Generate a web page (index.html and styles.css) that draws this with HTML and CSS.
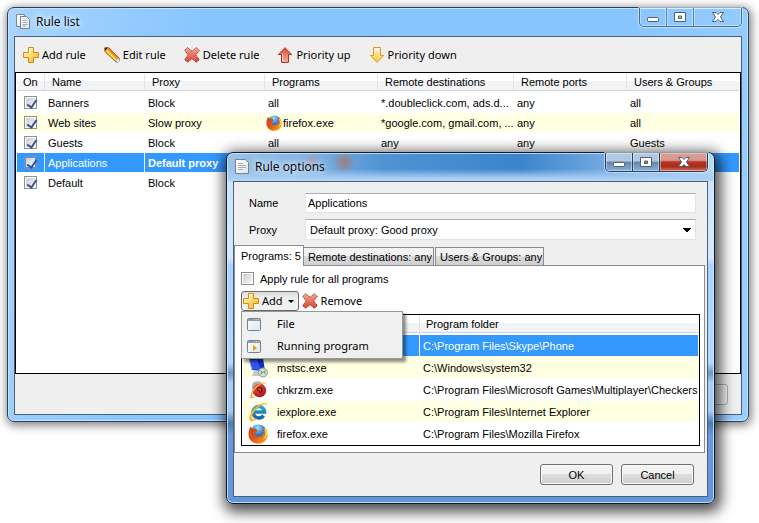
FILE: index.html
```html
<!DOCTYPE html>
<html lang="en">
<head>
<meta charset="utf-8">
<title>Rule list</title>
<link rel="stylesheet" href="styles.css">
</head>
<body>
<svg class="defs" aria-hidden="true">
  <defs>
    <linearGradient id="gold" x1="0" y1="0" x2="1" y2="1"><stop offset="0" stop-color="#fff6cc"/><stop offset=".5" stop-color="#ffdc6a"/><stop offset="1" stop-color="#f5a623"/></linearGradient>
    <linearGradient id="red" x1="0" y1="0" x2="0" y2="1"><stop offset="0" stop-color="#f3a898"/><stop offset="1" stop-color="#d8432c"/></linearGradient>
    <linearGradient id="redUp" x1="0" y1="0" x2="0" y2="1"><stop offset="0" stop-color="#d9492f"/><stop offset="1" stop-color="#f2b5a6"/></linearGradient>
    <linearGradient id="goldDown" x1="0" y1="0" x2="0" y2="1"><stop offset="0" stop-color="#fffbe6"/><stop offset="1" stop-color="#ffc526"/></linearGradient>
    <linearGradient id="paper" x1="0" y1="0" x2="1" y2="1"><stop offset="0" stop-color="#fff"/><stop offset="1" stop-color="#dfe5ea"/></linearGradient>
    <radialGradient id="globe" cx=".45" cy=".2" r=".8"><stop offset="0" stop-color="#9fe0fa"/><stop offset=".5" stop-color="#2f7fc8"/><stop offset="1" stop-color="#123a7c"/></radialGradient>
    <linearGradient id="fox" x1="0" y1="0" x2="1" y2="1"><stop offset="0" stop-color="#c8401a"/><stop offset=".5" stop-color="#e05a17"/><stop offset="1" stop-color="#fbb02a"/></linearGradient>
    <radialGradient id="ball" cx=".4" cy=".35" r=".7"><stop offset="0" stop-color="#f2594b"/><stop offset="1" stop-color="#a80f12"/></radialGradient>
    <linearGradient id="eblue" x1="0" y1="0" x2="0" y2="1"><stop offset="0" stop-color="#2aa4e6"/><stop offset="1" stop-color="#1466b0"/></linearGradient>
  </defs>
  <symbol id="plus" viewBox="0 0 16 16"><path d="M5.500.500h5v5h5v5h-5v5h-5v-5h-5v-5h5z" fill="url(#gold)" stroke="#cf8a1e"/><path d="M6.500 6.500V1.500h3" fill="none" stroke="#fffbe8"/></symbol>
  <symbol id="pencil" viewBox="0 0 16 16"><path d="M1 1l3.500-.5 11 11v1l-2.500 2.500h-1L.8 4.500z" fill="#f5a11c" stroke="#9c4a0a" stroke-width=".8"/><path d="M2.500 3.500l10 10" stroke="#ffe27a" stroke-width="1.600"/><path d="M4.500 2l9.500 9.500" stroke="#d9720c"/><path d="M.5.500l3.500.3-3 3z" fill="#3a2410"/><path d="M11.500 13.500l2.500-2.500 1.500 1.500v1.500L14 15.500h-1z" fill="#dcdcdc" stroke="#999" stroke-width=".6"/></symbol>
  <symbol id="cross" viewBox="0 0 16 16"><path d="M3.500.7L8 4.300 12.500.7l2.800 2.800L11.700 8l3.600 4.500-2.800 2.800L8 11.700l-4.500 3.600-2.800-2.800L4.300 8 .7 3.500z" fill="url(#red)" stroke="#a63323" stroke-dasharray="1.500 .6"/></symbol>
  <symbol id="up" viewBox="0 0 16 16"><path d="M8 .7l6.700 6.800h-3.200v8h-7v-8H1.300z" fill="url(#redUp)" stroke="#aa3a28"/><path d="M5.500 14.500v-8" stroke="#f7c9bf" fill="none"/></symbol>
  <symbol id="down" viewBox="0 0 16 16"><path d="M8 15.300l6.700-6.800h-3.200v-8h-7v8H1.300z" fill="url(#goldDown)" stroke="#dc9a1c"/></symbol>
  <symbol id="page" viewBox="0 0 16 16"><path d="M.5.500h10l3 3v11H.5z" fill="url(#paper)" stroke="#75818c"/><path d="M3 4.500h5M3 6.500h8M3 8.500h8M3 10.500h5" stroke="#a4aab0"/></symbol>
  <symbol id="pages" viewBox="0 0 16 16"><path d="M.5.500h8v12h-8z" fill="url(#paper)" stroke="#7d8b97"/><path d="M4.500 2.500h6l3 3v9h-9z" fill="url(#paper)" stroke="#75818c"/><path d="M6.500 6.500h4M6.500 8.500h5M6.500 10.500h5M6.500 12h3" stroke="#a4aab0"/></symbol>
  <symbol id="firefox" viewBox="0 0 20 20"><circle cx="10.500" cy="9" r="8.500" fill="url(#globe)"/><path d="M2.500 2.500L4.500 5l3-.5 2 1.800-.8 1.900L6.500 9.500c.5 2.500 2.500 3.500 5 3 2-.4 3.500-1.500 4-3.500.5-2-.2-4.500-1.500-6 3 1 5.500 4.500 5.500 8 0 5-4 8.700-9.300 8.700C4.500 19.700.5 15.500.5 10.500.5 7.500 1.300 4.500 2.500 2.500z" fill="url(#fox)"/><path d="M15.500 4c3 4 2.500 9-1 11.500 5-1 6-7 3-10.500z" fill="#fddc4b"/></symbol>
  <symbol id="checkers" viewBox="0 0 20 20"><path d="M4 6c0-4 4-5.500 8-4.500l4 4L5 15z" fill="#aeb0b3"/><circle cx="11.500" cy="10.500" r="6.700" fill="url(#ball)"/><path d="M9 9.500a2.500 2.500 0 1 1 2.500 3M9 9.500a2 2 0 0 0 3 1" fill="none" stroke="#760a0c" stroke-width="1.300"/><path d="M18.500 4C17 .5 9 4 5.500 9S1 18.500 3.500 18.500c1.500 0 3.500-.9 5-2-6 1.700-5.500-2-2-6.500S15.500 2.500 18.500 4z" fill="#f9b42e"/></symbol>
  <symbol id="ie" viewBox="0 0 20 20"><path d="M15.500 13.500a5.700 5.700 0 1 1 1-3.500H6.500" fill="none" stroke="url(#eblue)" stroke-width="3.600"/><path d="M19 3C18-.5 10 2 5.500 7.500S.5 19 3.500 19c1.500 0 3.500-1.200 5-2.500-6.500 3-5.500-2-2.500-6.500S16-.5 19 3z" fill="#fbbd2f" stroke="#e29d15" stroke-width=".4"/></symbol>
  <symbol id="remote" viewBox="0 0 20 20"><path d="M1 1l14-1 2 13-13-1z" fill="#1530c0"/><path d="M2 2l7 0 4 10-9-1z" fill="#3358ee"/><path d="M1 1l3 11" stroke="#9bb4e8"/><path d="M6 13h6l2 5H4z" fill="#c3c8ce"/><circle cx="15" cy="14.500" r="4.500" fill="#d5dbd8" stroke="#8f9a96"/><path d="M12.500 13l2 1.500-2 1.500M17.500 12.500l-2 1.500 2 1.500" fill="none" stroke="#2f9d3c"/></symbol>
  <symbol id="win" viewBox="0 0 14 13"><rect x=".5" y=".5" width="13" height="12" rx="1" fill="url(#paper)" stroke="#75818c"/><path d="M1 2h12" stroke="#8d9cab" stroke-width="2"/><path d="M7 1.500h1m1 0h1m1 0h1" stroke="#e9d77a"/></symbol>
  <symbol id="winrun" viewBox="0 0 14 13"><use href="#win"/><path d="M6 5l4 3-4 3z" fill="#e8a010"/></symbol>
  <symbol id="gmin" viewBox="0 0 14 12"><rect x="1.500" y="6.500" width="11" height="4" rx="1" fill="#fff" stroke="#4f5f75"/></symbol>
  <symbol id="gmax" viewBox="0 0 14 12"><path fill-rule="evenodd" d="M1.500 1.500h11v9h-11zM5.500 5v2.500h3V5z" fill="#fff" stroke="#4f5f75"/></symbol>
  <symbol id="gx" viewBox="0 0 14 12"><path d="M1.500 1.500h3.500l2 2 2-2h3.500L9.500 6l3 4.500H9l-2-2-2 2H1.500L4.500 6z" fill="#fff" stroke="#4f5f75"/></symbol>
</svg>

<main class="window main">
  <header class="titlebar">
    <svg class="i16"><use href="#pages"/></svg>
    <h1>Rule list</h1>
    <div class="controls">
      <button type="button" aria-label="Minimize"><svg><use href="#gmin"/></svg></button>
      <button type="button" aria-label="Maximize"><svg><use href="#gmax"/></svg></button>
      <button type="button" class="x" aria-label="Close"><svg><use href="#gx"/></svg></button>
    </div>
  </header>
  <div class="client">
    <nav class="toolbar">
      <button type="button"><svg class="i16"><use href="#plus"/></svg>Add rule</button>
      <button type="button"><svg class="i16"><use href="#pencil"/></svg>Edit rule</button>
      <button type="button"><svg class="i16"><use href="#cross"/></svg>Delete rule</button>
      <button type="button"><svg class="i16"><use href="#up"/></svg>Priority up</button>
      <button type="button"><svg class="i16"><use href="#down"/></svg>Priority down</button>
    </nav>
    <div class="list rules">
      <table>
        <colgroup><col class="c-on"><col class="c-name"><col class="c-proxy"><col class="c-mid"><col class="c-dest"><col class="c-mid"><col></colgroup>
        <thead><tr><th>On</th><th>Name</th><th>Proxy</th><th>Programs</th><th>Remote destinations</th><th>Remote ports</th><th>Users &amp; Groups</th></tr></thead>
        <tbody>
          <tr><td><input type="checkbox" checked aria-label="Banners"></td><td>Banners</td><td>Block</td><td>all</td><td>*.doubleclick.com, ads.d...</td><td>any</td><td>all</td></tr>
          <tr><td><input type="checkbox" checked aria-label="Web sites"></td><td>Web sites</td><td>Slow proxy</td><td class="app"><svg class="i16"><use href="#firefox"/></svg>firefox.exe</td><td>*google.com, gmail.com, ...</td><td>any</td><td>all</td></tr>
          <tr><td><input type="checkbox" checked aria-label="Guests"></td><td>Guests</td><td>Block</td><td>all</td><td>any</td><td>any</td><td>Guests</td></tr>
          <tr class="selected"><td><input type="checkbox" checked aria-label="Applications"></td><td>Applications</td><td><b>Default proxy</b></td><td></td><td></td><td></td><td></td></tr>
          <tr><td><input type="checkbox" checked aria-label="Default"></td><td>Default</td><td>Block</td><td></td><td></td><td></td><td></td></tr>
        </tbody>
      </table>
    </div>
    <footer class="actions"><button type="button" class="push" aria-label="Close"></button></footer>
  </div>
</main>

<section class="window dialog" role="dialog" aria-labelledby="dlg-title">
  <header class="titlebar">
    <svg class="i16"><use href="#page"/></svg>
    <h2 id="dlg-title">Rule options</h2>
    <div class="controls">
      <button type="button" aria-label="Minimize"><svg><use href="#gmin"/></svg></button>
      <button type="button" aria-label="Maximize"><svg><use href="#gmax"/></svg></button>
      <button type="button" class="x" aria-label="Close"><svg><use href="#gx"/></svg></button>
    </div>
  </header>
  <form class="client">
    <div class="fields">
      <label for="name">Name</label><input id="name" type="text" value="Applications">
      <label for="proxy">Proxy</label><select id="proxy"><option>Default proxy: Good proxy</option></select>
    </div>
    <div class="tabs" role="tablist">
      <button type="button" role="tab" aria-selected="true">Programs: 5</button>
      <button type="button" role="tab" aria-selected="false">Remote destinations: any</button>
      <button type="button" role="tab" aria-selected="false">Users &amp; Groups: any</button>
    </div>
    <div class="pane" role="tabpanel">
      <label class="all"><input type="checkbox">Apply rule for all programs</label>
      <div class="bar">
        <div class="drop">
          <button type="button" class="open"><svg class="i16"><use href="#plus"/></svg>Add<span class="caret"></span></button>
          <div class="menu" role="menu">
            <button type="button" role="menuitem"><svg><use href="#win"/></svg>File</button>
            <button type="button" role="menuitem"><svg><use href="#winrun"/></svg>Running program</button>
          </div>
        </div>
        <button type="button"><svg class="i16"><use href="#cross"/></svg>Remove</button>
      </div>
      <div class="list programs">
        <table>
          <colgroup><col class="p-icon"><col class="p-name"><col></colgroup>
          <thead><tr><th></th><th></th><th>Program folder</th></tr></thead>
          <tbody>
            <tr class="selected"><td></td><td></td><td>C:\Program Files\Skype\Phone</td></tr>
            <tr><td><svg class="i20"><use href="#remote"/></svg></td><td>mstsc.exe</td><td>C:\Windows\system32</td></tr>
            <tr><td><svg class="i20"><use href="#checkers"/></svg></td><td>chkrzm.exe</td><td>C:\Program Files\Microsoft Games\Multiplayer\Checkers</td></tr>
            <tr><td><svg class="i20"><use href="#ie"/></svg></td><td>iexplore.exe</td><td>C:\Program Files\Internet Explorer</td></tr>
            <tr><td><svg class="i20"><use href="#firefox"/></svg></td><td>firefox.exe</td><td>C:\Program Files\Mozilla Firefox</td></tr>
          </tbody>
        </table>
      </div>
    </div>
    <footer class="actions"><button type="button" class="push">OK</button><button type="button" class="push">Cancel</button></footer>
  </form>
</section>
</body>
</html>
```
FILE: styles.css
```css
* { box-sizing: border-box; }
body { margin: 0; padding: 7px 10px 16px 7px; background: #fff; color: #000; font: 11px/14px "Liberation Sans", Arial, sans-serif; }
button, input, select { font: inherit; color: inherit; margin: 0; }
button { border: 0; padding: 0; background: none; }
svg { display: block; flex: none; }
.defs { position: absolute; width: 0; height: 0; }
.i16 { width: 16px; height: 16px; }
.i20 { width: 20px; height: 20px; }

/* Window frame */
.window { border: 1px solid #24405e; border-radius: 7px; padding: 0 6px 6px; }
.main { background: linear-gradient(100deg, #a9d4fd 0, #87c5ff 25%, #87c5ff 75%, #9bcfff 100%); box-shadow: inset 0 0 0 1px #c5e3ff, 1px 2px 8px 2px rgba(0,0,0,.45); }
.dialog {
  position: absolute; left: 226px; right: 44px; top: 152px; border-color: #0f1c2c;
  background: linear-gradient(180deg, transparent 28px, #cde4fd 29px, #d6e8fc 105px, #a9d2fd 112px, #b5d8fd 210px, #6f96bd 220px, #a9cff5 230px, #a5cbf2 258px, #4d7cae 270px, #6a9add 282px, #6396dc 100%),
    linear-gradient(180deg, transparent 16px, #a8cdf3 25px, #b9d8f7 29px),
    radial-gradient(circle at 117px 9px, rgba(170,120,105,.7) 2px, transparent 12px),
    radial-gradient(circle at 85px 8px, rgba(200,130,130,.5) 0, transparent 8px),
    linear-gradient(90deg, #9cc3e8 0, #86b6e6 15%, #4f93d3 32%, #3b84cc 60%, #74aae0 78%, #b9d8f7 100%);
  box-shadow: inset 0 0 0 1px rgba(215,236,255,.75), 2px 4px 14px 4px rgba(0,0,0,.7);
}
.titlebar { display: flex; align-items: flex-start; gap: 4px; height: 28px; padding-left: 2px; }
.titlebar > .i16 { margin-top: 6px; }
.titlebar h1, .titlebar h2 { flex: 1; margin: 6px 0 0; font: 12px/16px "Open Sans", "Noto Sans", sans-serif; text-shadow: 0 0 6px #fff, 0 0 9px #fff; }
.controls { display: flex; height: 19px; border: 1px solid #4a6a90; border-top: 0; border-radius: 0 0 5px 5px; overflow: hidden; box-shadow: 0 0 0 1px rgba(225,242,255,.6); }
.controls button { width: 27px; display: grid; place-items: center; border-right: 1px solid #5e84ac; box-shadow: inset 0 0 0 1px rgba(255,255,255,.4); }
.controls .x { width: 47px; border-right: 0; }
.controls svg { width: 14px; height: 12px; }
.dialog .controls { border-color: #26415f; }
.dialog .controls button { background: linear-gradient(#b0c8e2 45%, #6685a8 50%, #88b1dc); border-color: #26415f; }
.dialog .controls .x { background: linear-gradient(#d99b90 40%, #b83424 50%, #a82c20 75%, #dd7058); }
.client { border: 1px solid #47617d; background: #efefef; }

/* Toolbars */
.toolbar { display: flex; align-items: center; gap: 18px; height: 35px; padding-left: 8px; }
.toolbar button, .bar button { display: flex; align-items: center; gap: 3px; font: 11px/16px "Noto Sans", "Open Sans", sans-serif; white-space: nowrap; }

/* Lists */
.list { border: 1px solid #000; background: #fff; padding: 0 1px; }
.rules { min-height: 302px; }
table { width: 100%; table-layout: fixed; border-collapse: separate; border-spacing: 0; }
th { height: 18px; padding: 0 7px; text-align: left; font-weight: 400; background: linear-gradient(#fff 45%, #f1f3f5 50%); border-right: 1px solid #e2e4e6; border-bottom: 1px solid #d2d4d6; white-space: nowrap; }
tbody::before { content: ""; display: block; height: 2px; }
td { height: 20px; padding: 0 3px; border: 0 solid #fff; border-width: 0 1px 1px 0; background-clip: padding-box; white-space: nowrap; overflow: hidden; }
th:last-child, td:last-child { border-right: 0; }
tbody tr:nth-child(even) td { background-color: #ffffe1; }
tbody tr.selected td { background-color: #3399ff; color: #fff; }
.c-on { width: 28px; }
.c-name { width: 100px; }
.c-proxy { width: 120px; }
.c-mid { width: 113px; }
.c-dest { width: 136px; }
.rules th:first-child { padding: 0 6px; }
.rules td:first-child { padding: 0 7px; }
.app svg { float: left; margin: 0 1px 0 -2px; }
.app { line-height: 16px; }
.p-icon { width: 31px; }
.p-name { width: 146px; }
.programs td { height: 22px; }
.programs th { padding: 0 6px; }
.programs td:first-child { padding: 0 5px; }

input[type="checkbox"] { appearance: none; display: block; width: 13px; height: 13px; border: 1px solid #8e8f8f; background: linear-gradient(135deg, #c9ced5, #f6f6f6) content-box #f4f4f4; padding: 1px; }
input[type="checkbox"]:checked::after { content: ""; display: block; width: 4px; height: 8px; margin: 0 0 0 3px; border: solid #3c4f91; border-width: 0 2px 2px 0; transform: rotate(35deg); }

/* Push buttons */
.actions { display: flex; justify-content: flex-end; align-items: center; gap: 8px; height: 40px; padding-right: 13px; }
.push { width: 73px; height: 21px; border: 1px solid #707070; border-radius: 3px; background: linear-gradient(#f2f2f2 45%, #dddddd 50%, #cfcfcf); box-shadow: inset 0 0 0 1px #fafafa; }
.main .push { border-color: #adb2b5; background: #f4f4f4; }
.dialog .actions { height: 43px; }

/* Dialog form */
.fields { display: grid; grid-template-columns: 56px 1fr; row-gap: 6px; align-items: center; padding: 11px 11px 5px 15px; }
.fields input, .fields select { width: 100%; height: 20px; padding: 0 2px; border: 1px solid #e2e3ea; border-top-color: #abadb3; background: #fff; border-radius: 0; }
.fields select { appearance: none; height: 21px; padding-left: 4px; background: linear-gradient(45deg, transparent 50%, #000 50%) right 8px center / 4px 4px no-repeat, linear-gradient(-45deg, transparent 50%, #000 50%) right 4px center / 4px 4px no-repeat #fff; }
.tabs { display: flex; align-items: flex-end; height: 20px; }
.tabs button { height: 18px; padding: 0 1px 0 4px; border: 1px solid #898c95; border-bottom: 0; background: linear-gradient(#f2f2f2 45%, #dcdcdc 50%, #cfcfcf); white-space: nowrap; margin-right: 1px; }
.tabs [aria-selected="true"] { height: 21px; margin: 0 -1px -1px 0; padding: 0 2px 0 6px; background: #fff; position: relative; z-index: 1; }
.pane { border: 1px solid #898c95; background: #fff; padding: 6px 4px 6px 6px; margin-right: 2px; }
.all { display: flex; align-items: center; gap: 6px; height: 13px; }
.bar { display: flex; gap: 3px; margin: 6px 0 3px; height: 20px; }
.drop { position: relative; display: flex; }
.bar .open { padding: 0 4px 0 1px; border: 1px solid #6a6a6a; border-radius: 3px; background: linear-gradient(#dcdcdc, #f1f1f1 40%); }
.caret { border: 3px solid transparent; border-top-color: #000; border-bottom: 0; margin-left: 2px; }
.menu { position: absolute; z-index: 2; top: 20px; left: 0; width: 162px; padding: 1px; border: 1px solid #979797; background: #f0f0f0; box-shadow: 3px 3px 3px rgba(0,0,0,.45); }
.menu button { width: 100%; height: 22px; padding-left: 4px; gap: 16px; }
.menu svg { width: 14px; height: 13px; }
```
